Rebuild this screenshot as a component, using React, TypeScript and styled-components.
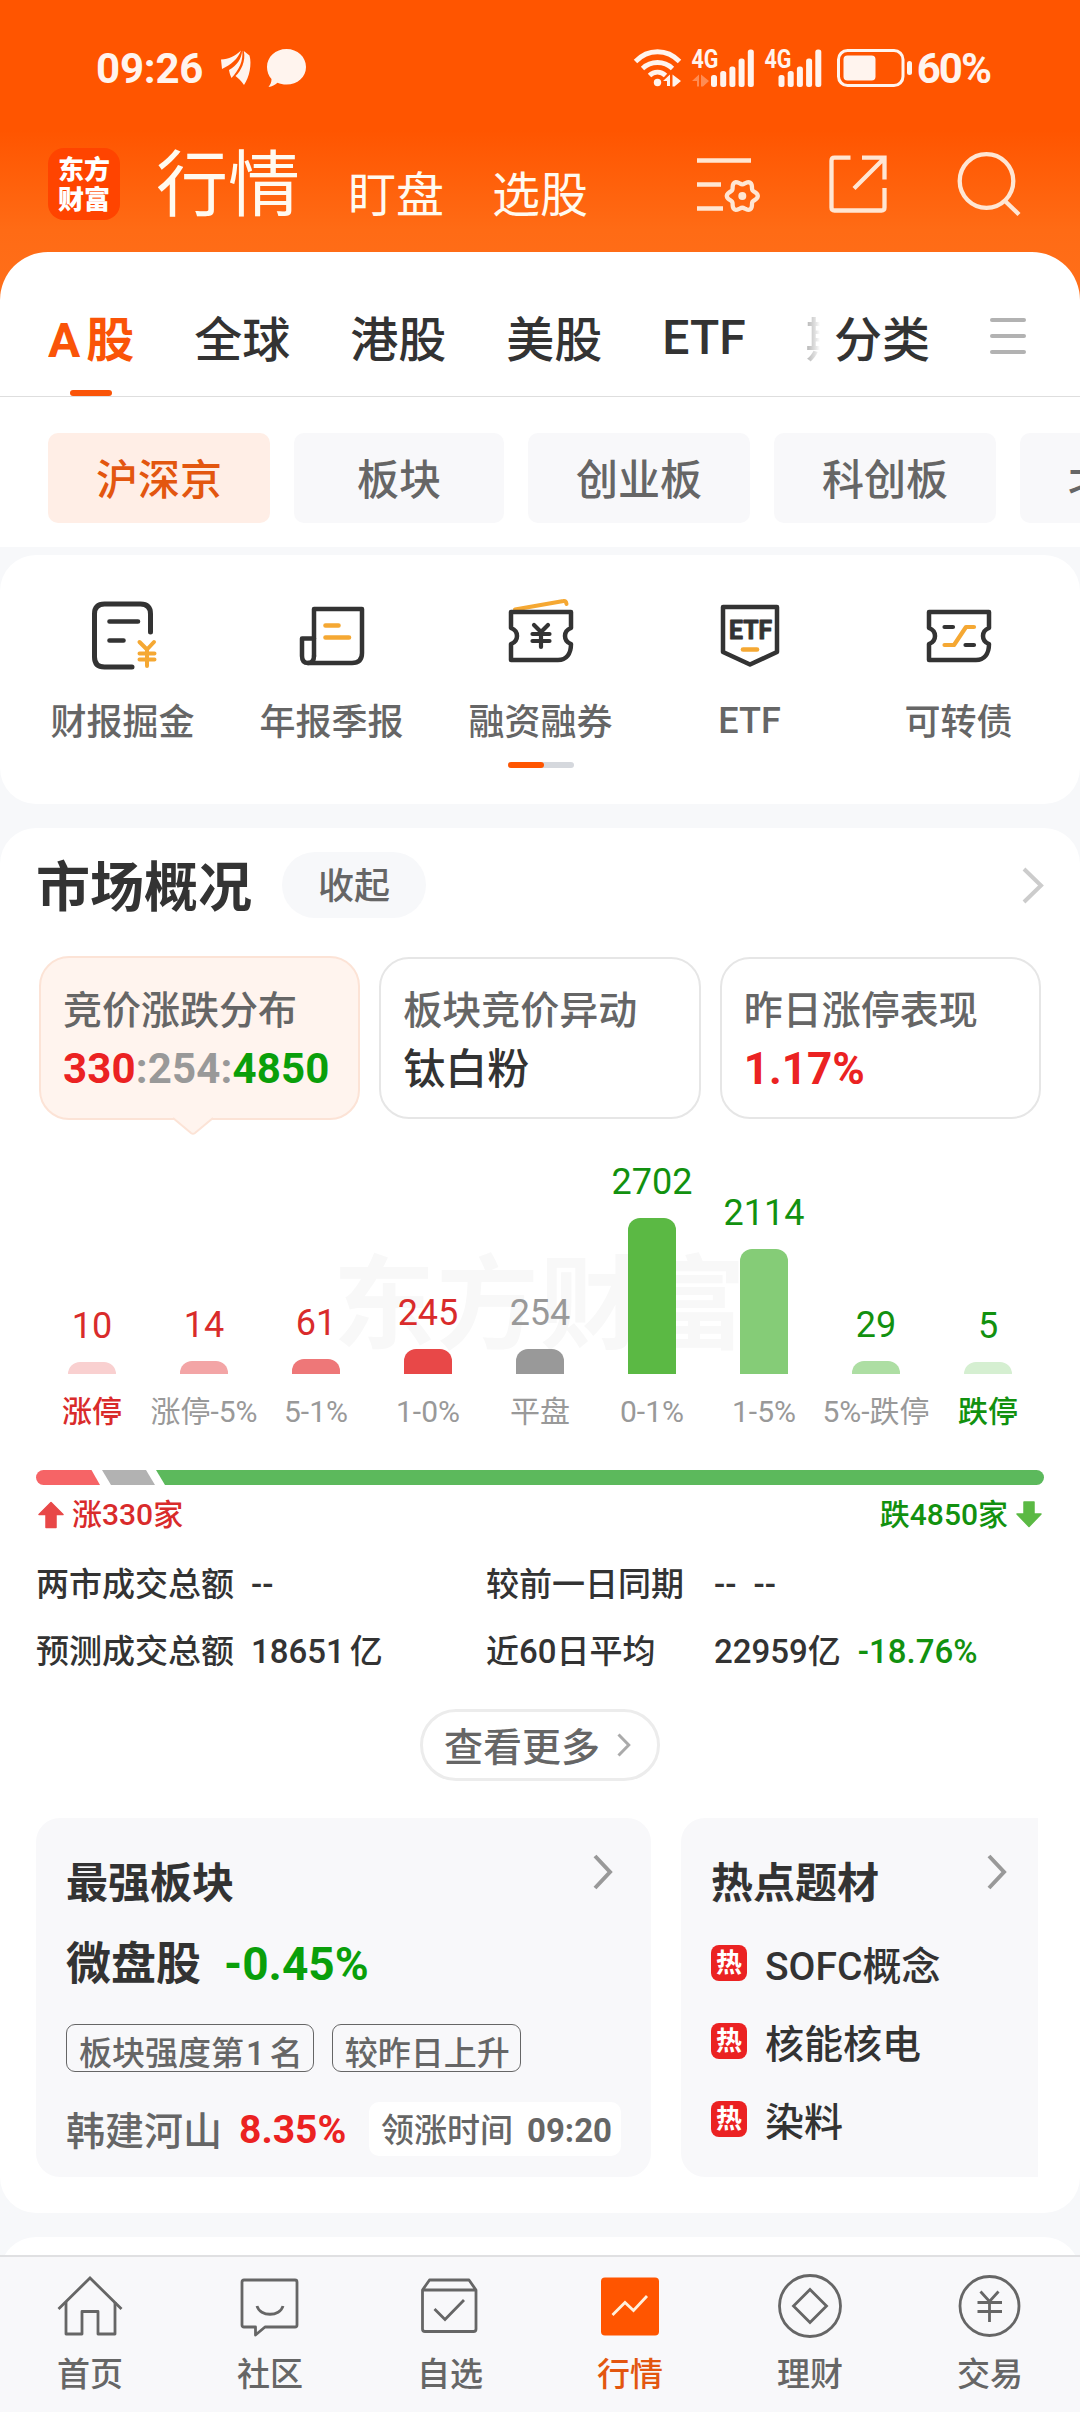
import React from 'react';
import styled, { createGlobalStyle, css } from 'styled-components';

const FONT = `Roboto, "Noto Sans CJK SC", "Noto Sans", sans-serif`;
const ORANGE = '#ff5500';
const RED = '#eb2222';
const GREEN = '#0a9f0a';
const INK = '#333333';
const MUTED = '#666666';
const PALE = '#f7f8fa';

const GlobalStyle = createGlobalStyle`
  *, *::before, *::after { box-sizing: border-box; }
  body { margin: 0; background: ${PALE}; }
  svg { display: block; flex: none; overflow: visible; }
`;

const Screen = styled.div`
  width: 1080px;
  height: 2412px;
  display: flex;
  flex-direction: column;
  overflow: hidden;
  background: ${PALE};
  font-family: ${FONT};
  color: ${INK};
  white-space: nowrap;
`;

const Scroll = styled.main`
  flex: 1;
  min-height: 0;
  overflow: hidden;
`;

/* ---------- header ---------- */

const Hero = styled.header`
  background: linear-gradient(#ff5500 0, #ff5500 130px, #ff6b15 230px, #ff6f1a 300px);
`;

const StatusBar = styled.div`
  height: 136px;
  display: flex;
  align-items: center;
  justify-content: space-between;
  padding: 0 90px 0 96px;
  color: #fff4ee;
`;

const StatusGroup = styled.div`
  display: flex;
  align-items: center;
`;

const StatusText = styled.span<{ $ml?: number; $tight?: boolean }>`
  font-size: 42px;
  line-height: 50px;
  font-weight: 700;
  letter-spacing: ${(p) => (p.$tight ? -2 : -0.2)}px;
  margin-left: ${(p) => p.$ml ?? 0}px;
  padding-top: 2px;
`;

const Gap = styled.span<{ $w: number }>`
  width: ${(p) => p.$w}px;
`;

const TitleBar = styled.div`
  height: 116px;
  padding: 0 58px 20px 48px;
  display: flex;
  align-items: center;
  color: #fffaf0;
`;

const Logo = styled.div`
  width: 72px;
  height: 72px;
  border-radius: 16px;
  background: #ff4400;
  display: flex;
  flex-direction: column;
  align-items: center;
  justify-content: center;
  padding-top: 1px;
  font-size: 26px;
  line-height: 30px;
  font-weight: 900;
  color: #fff;
`;

const PageTitle = styled.h1`
  margin: 3px 0 0 36px;
  font-size: 72px;
  line-height: 84px;
  font-weight: 400;
`;

const PageLink = styled.a`
  margin: 24px 0 0 48px;
  font-size: 48px;
  line-height: 56px;
`;

const TitleIcons = styled.div`
  margin-left: auto;
  display: flex;
  align-items: center;
  gap: 68px;
`;

/* ---------- tabs ---------- */

const Sheet = styled.section`
  background: #fff;
  border-radius: 48px 48px 0 0;
`;

const TabRow = styled.nav`
  height: 145px;
  border-bottom: 1px solid #dedede;
  display: flex;
  align-items: stretch;
  padding-left: 48px;
`;

const TabScroller = styled.div`
  width: 774px;
  display: flex;
  gap: 60px;
  overflow: hidden;
`;

const tabText = css`
  display: flex;
  align-items: center;
  padding-top: 33px;
  font-size: 48px;
  line-height: 56px;
  font-weight: 500;
  flex: none;
  height: 144px;
  padding-bottom: 0;
`;

const Tab = styled.a<{ $active?: boolean; $lift?: number }>`
  ${tabText}
  position: relative;
  font-weight: ${(p) => (p.$active ? 700 : 500)};
  color: ${(p) => (p.$active ? '#fa5408' : INK)};
  padding-bottom: ${(p) => p.$lift ?? 0}px;
  ${(p) =>
    p.$active &&
    css`
      gap: 6px;
      &::after {
        content: '';
        position: absolute;
        left: 50%;
        bottom: 0;
        width: 42px;
        height: 6px;
        margin-left: -21px;
        border-radius: 3px;
        background: #fa5408;
      }
    `}
`;

const FadedTab = styled(Tab)`
  color: transparent;
  background: linear-gradient(90deg, #b4b4b4, #e4e4e4 10px, #fff 14px);
  -webkit-background-clip: text;
  background-clip: text;
`;

const SortTab = styled.a`
  ${tabText}
  margin-left: 12px;
`;

const Burger = styled.div`
  margin: 66px 0 0 60px;
  width: 36px;
  height: 36px;
  display: flex;
  flex-direction: column;
  justify-content: space-between;
`;

const BurgerLine = styled.i`
  height: 4px;
  border-radius: 2px;
  background: #b2b2b2;
`;

const PillRow = styled.div`
  padding: 36px 0 24px 48px;
  display: flex;
  gap: 24px;
  overflow: hidden;
`;

const Pill = styled.a<{ $active?: boolean; $w: number }>`
  flex: none;
  width: ${(p) => p.$w}px;
  height: 90px;
  border-radius: 10px;
  display: flex;
  align-items: center;
  justify-content: center;
  padding-top: 5px;
  font-size: 42px;
  line-height: 50px;
  font-weight: 500;
  color: ${(p) => (p.$active ? '#e3560f' : MUTED)};
  background: ${(p) => (p.$active ? '#ffeee6' : '#f8f8fa')};
`;

/* ---------- shortcuts ---------- */

const Shortcuts = styled.section`
  margin-top: 8px;
  height: 249px;
  border-radius: 36px;
  background: #fff;
  padding: 40px 17px 0 18px;
`;

const ShortcutGrid = styled.div`
  display: grid;
  grid-template-columns: repeat(5, 1fr);
`;

const Shortcut = styled.a`
  display: flex;
  flex-direction: column;
  align-items: center;
  gap: 26px;
  font-size: 36px;
  line-height: 44px;
  font-weight: 500;
  color: ${MUTED};
`;

const ShortcutLabel = styled.span<{ $lift?: boolean }>`
  margin-top: ${(p) => (p.$lift ? -2 : 0)}px;
`;

const Pager = styled.div`
  width: 66px;
  height: 6px;
  margin: 17px auto 0;
  border-radius: 3px;
  background: #d5d8dd;
  display: flex;
`;

const PagerThumb = styled.i`
  width: 36px;
  border-radius: 3px;
  background: ${ORANGE};
`;

/* ---------- market overview ---------- */

const Market = styled.section`
  margin-top: 24px;
  height: 1385px;
  border-radius: 36px;
  background: #fff;
  padding: 24px 36px 0;
`;

const SectionHead = styled.div`
  height: 66px;
  display: flex;
  align-items: center;
`;

const SectionTitle = styled.h2`
  margin: 7px 0 0;
  font-size: 54px;
  line-height: 64px;
  font-weight: 700;
`;

const Collapse = styled.button`
  margin: 0 auto 0 30px;
  width: 144px;
  height: 66px;
  border: 0;
  border-radius: 33px;
  background: ${PALE};
  font: 400 36px/44px ${FONT};
  font-weight: 500;
  color: ${MUTED};
  padding: 4px 0 0;
`;

const MetricRow = styled.div`
  margin: 38px 3px 0 3px;
  display: grid;
  grid-template-columns: repeat(3, 1fr);
  gap: 19px;
`;

const Metric = styled.div<{ $active?: boolean }>`
  position: relative;
  height: ${(p) => (p.$active ? 164 : 162)}px;
  margin-top: ${(p) => (p.$active ? 0 : 1)}px;
  border: 2px solid ${(p) => (p.$active ? '#fce3d6' : '#e6e6e6')};
  border-radius: 30px;
  background: ${(p) => (p.$active ? '#fff4ee' : '#fff')};
  padding: ${(p) => (p.$active ? 29 : 28)}px 0 0 22px;
`;

const MetricTitle = styled.div`
  font-size: 39px;
  line-height: 48px;
  font-weight: 500;
  color: ${MUTED};
`;

const MetricValue = styled.div<{ $color?: string; $weight?: number; $size?: number }>`
  margin-top: ${(p) => (p.$weight ? 9 : 8)}px;
  font-size: ${(p) => p.$size ?? 42}px;
  line-height: 52px;
  font-weight: ${(p) => p.$weight ?? 700};
  color: ${(p) => p.$color ?? INK};
`;

const Tint = styled.span<{ $color: string }>`
  color: ${(p) => p.$color};
`;

const Tally = styled(Tint)`
  letter-spacing: 0.15px;
`;

const MetricTail = styled.svg`
  position: absolute;
  left: 50%;
  margin-left: -27px;
  top: 157px;
`;

const Chart = styled.div`
  position: relative;
  height: 254px;
  display: grid;
  grid-template-columns: repeat(9, 1fr);
  align-items: end;
`;

const Watermark = styled.div`
  position: absolute;
  left: 297px;
  bottom: 10px;
  font-size: 102px;
  line-height: 116px;
  letter-spacing: 1.5px;
  font-weight: 700;
  color: #f8f8f8;
`;

const Column = styled.div<{ $color: string }>`
  position: relative;
  display: flex;
  flex-direction: column;
  align-items: center;
  gap: 18px;
  font-size: 36px;
  line-height: 36px;
  color: ${(p) => p.$color};
`;

const Bar = styled.i<{ $fill: string }>`
  width: 48px;
  border-radius: 12px 12px 0 0;
  background: ${(p) => p.$fill};
`;

const AxisRow = styled.div`
  height: 96px;
  padding-top: 18px;
  display: grid;
  grid-template-columns: repeat(9, 112px);
`;

const AxisLabel = styled.span<{ $color: string; $strong?: boolean }>`
  display: flex;
  justify-content: center;
  font-size: 30px;
  line-height: 40px;
  font-weight: ${(p) => (p.$strong ? 500 : 400)};
  color: ${(p) => p.$color};
`;

const Ratio = styled.div`
  height: 15px;
  border-radius: 7.5px;
  overflow: hidden;
  display: flex;
`;

const RatioPart = styled.i<{ $w?: number; $fill: string; $clip: string; $pull?: number }>`
  ${(p) => (p.$w ? `width: ${p.$w}px;` : 'flex: 1;')}
  margin-left: ${(p) => p.$pull ?? 0}px;
  background: ${(p) => p.$fill};
  clip-path: polygon(${(p) => p.$clip});
`;

const RatioLabels = styled.div`
  height: 58px;
  padding: 0 2px 0 2px;
  display: flex;
  align-items: center;
  justify-content: space-between;
`;

const RatioLabel = styled.span<{ $color: string }>`
  display: flex;
  align-items: center;
  gap: 8px;
  padding-top: 1px;
  font-size: 30px;
  line-height: 40px;
  font-weight: 500;
  color: ${(p) => p.$color};
`;

const Stats = styled.dl`
  margin: 8px 0 0;
  display: grid;
  grid-template-columns: 215px 235px 228px auto;
  grid-auto-rows: 67px;
  align-items: center;
  font-size: 33px;
  line-height: 40px;
  font-weight: 500;
`;

const StatName = styled.dt``;

const StatValue = styled.dd`
  margin: 0;
  display: flex;
  gap: 17px;
`;

const Unit = styled.span`
  margin-left: 5px;
`;

const More = styled.button`
  margin: 24px auto 0;
  width: 240px;
  height: 72px;
  border: 3px solid #ececec;
  border-radius: 36px;
  background: #fff;
  padding: 0 26px 0 21px;
  display: flex;
  align-items: center;
  justify-content: space-between;
  font: 400 39px/46px ${FONT};
  font-weight: 500;
  color: ${MUTED};
`;

const MoreText = styled.span`
  margin-top: 5px;
`;

const Boards = styled.div`
  margin-top: 37px;
  display: flex;
  gap: 30px;
  padding-right: 6px;
`;

const Board = styled.article<{ $w?: number }>`
  ${(p) => (p.$w ? `width: ${p.$w}px; border-radius: 24px;` : 'flex: 1; border-radius: 24px 0 0 24px;')}
  height: 359px;
  background: #f8f8fa;
  padding: 36px 30px 0;
`;

const BoardHead = styled.div<{ $pad: number }>`
  display: flex;
  justify-content: space-between;
  align-items: flex-start;
  height: 56px;
  padding-right: ${(p) => p.$pad}px;
`;

const BoardTitle = styled.h3`
  margin: 4px 0 0;
  font-size: 42px;
  line-height: 52px;
  font-weight: 700;
`;

const Leader = styled.div`
  margin-top: 25px;
  height: 60px;
  display: flex;
  align-items: center;
  gap: 23px;
  font-size: 45px;
  line-height: 56px;
  font-weight: 700;
`;

const LeaderChange = styled(Tint)`
  margin-top: -3px;
  font-size: 46px;
`;

const TagRow = styled.div`
  margin-top: 29px;
  display: flex;
  gap: 18px;
`;

const Tag = styled.span`
  height: 48px;
  border: 1.5px solid ${MUTED};
  border-radius: 9px;
  padding: 9px 10px 0 12px;
  font-size: 33px;
  line-height: 40px;
  font-weight: 500;
  color: ${MUTED};
`;

const TagNumber = styled.span`
  margin: 0 5px 0 2px;
`;

const StockRow = styled.div`
  margin-top: 30px;
  height: 54px;
  display: flex;
  align-items: center;
  font-size: 39px;
  line-height: 48px;
  font-weight: 500;
  color: ${MUTED};
`;

const StockName = styled.span`
  margin-top: 5px;
`;

const StockGain = styled.b`
  margin: 2px 0 0 17px;
  font-weight: 700;
  color: ${RED};
`;

const LeadTime = styled.span`
  margin-left: auto;
  height: 54px;
  width: 252px;
  padding: 4px 9px 0 12px;
  border-radius: 10px;
  background: #fff;
  display: flex;
  align-items: center;
  justify-content: space-between;
  font-size: 33px;
  line-height: 40px;
`;

const Topics = styled.ul`
  list-style: none;
  margin: 16px 0 0;
  padding: 0;
`;

const Topic = styled.li`
  height: 78px;
  display: flex;
  align-items: center;
  gap: 18px;
  font-size: 39px;
  line-height: 48px;
  font-weight: 500;
`;

const HotBadge = styled.span`
  width: 36px;
  height: 36px;
  margin-top: -4px;
  border-radius: 8px;
  background: ${RED};
  color: #fff;
  text-align: center;
  font-size: 26px;
  line-height: 37px;
  font-weight: 700;
`;

const TopicName = styled.span`
  margin-top: 4px;
`;

const NextCard = styled.section`
  margin-top: 24px;
  height: 120px;
  border-radius: 36px;
  background: #fff;
`;

/* ---------- bottom navigation ---------- */

const BottomNav = styled.nav`
  flex: none;
  height: 157px;
  border-top: 2px solid #e0e0e2;
  background: #f8f8fa;
  display: grid;
  grid-template-columns: repeat(6, 1fr);
`;

const NavItem = styled.a<{ $active?: boolean }>`
  padding-top: 16px;
  display: flex;
  flex-direction: column;
  align-items: center;
  gap: 16px;
  font-size: 33px;
  line-height: 40px;
  font-weight: 500;
  color: ${(p) => (p.$active ? '#e3560f' : MUTED)};
`;

/* ---------- icons ---------- */

const Chevron = ({ w, h, color, sw }: { w: number; h: number; color: string; sw: number }) => (
  <svg width={w} height={h} viewBox={`0 0 ${w} ${h}`} fill="none" stroke={color} strokeWidth={sw}>
    <path d={`M${sw / 2} ${sw / 2}L${w - sw * 0.75} ${h / 2}L${sw / 2} ${h - sw / 2}`} />
  </svg>
);

const LeafIcon = () => (
  <svg width="30" height="36" viewBox="0 0 30 36" fill="currentColor">
    <path d="M0 9.500C8 9.500 14 6 20 .5C17 9 10 14.500 1 19Z" />
    <path d="M21.200 .5C20.500 9 16 15.500 8 20C8.500 23 9.500 26 10.500 28C18 20 22.500 11 21.200 .5Z" />
    <path d="M22.800 1C25 11 20 21 14.500 26C17 28 20.500 31 23 35C28.500 27 31 14 28.500 5.500Z" />
  </svg>
);

const BubbleIcon = () => (
  <svg width="39" height="39" viewBox="0 0 39 39" fill="currentColor">
    <path d="M19.500 0C30.500 0 39 7.800 39 18S30.500 35.500 19.500 35.500C16 35.500 13 34.800 10.500 33.700C8 36 5 37.500 1.500 38C3.500 35.500 4.500 33 4.500 30C1.500 27 0 22.500 0 18C0 7.800 8.500 0 19.500 0Z" />
  </svg>
);

const WifiIcon = () => (
  <svg width="48" height="39" viewBox="0 0 48 39" fill="none" stroke="currentColor" strokeWidth="4.800" strokeLinecap="butt">
    <path d="M1.500 12.500C14 -.5 33 -.5 45.500 12.500" />
    <path d="M8.500 19.500C17 11.500 30 11.500 38.500 19.500" />
    <path d="M15.500 26.500C20 22 27 22 31.500 26.500" />
    <circle cx="23.500" cy="33.500" r="3.700" fill="currentColor" stroke="none" />
    <path d="M29 32L36 25.500V37H33V32ZM38.500 25.500L47 32L40.500 37.500H38.500Z" fill="currentColor" stroke="none" />
  </svg>
);

const SignalIcon = ({ data }: { data?: boolean }) => {
  const x0 = data ? 19 : 13.5;
  return (
    <svg width={data ? 62 : 57} height="38" viewBox={`0 0 ${data ? 62 : 57} 38`} fill="currentColor">
      <text x="-.5" y="19" fontFamily="Roboto" fontWeight="700" fontSize="25" textLength="27" lengthAdjust="spacingAndGlyphs">
        4G
      </text>
      {data && <path opacity=".35" d="M0 32L7 25.500V37.500H5V32ZM9 25.500L17 32L11 37.500H9Z" />}
      {[12, 16, 20.5, 28.5, 37.5].map((h, i) => (
        <rect key={h} x={x0 + i * 9.2} y={38 - h} width="6" height={h} rx="2.500" />
      ))}
    </svg>
  );
};

const BatteryIcon = () => (
  <svg width="76" height="38" viewBox="0 0 76 38" fill="currentColor">
    <rect x="1.500" y="1.500" width="64.500" height="35" rx="9" fill="none" stroke="currentColor" strokeWidth="3" />
    <rect x="6.500" y="6.500" width="32" height="25" rx="4" />
    <rect x="70" y="12" width="5" height="14" rx="2.500" />
  </svg>
);

const gearPath = Array.from({ length: 73 }, (_, i) => {
  const a = (i * 5 * Math.PI) / 180;
  const r = 13.6 + 1.9 * Math.cos(6 * a);
  return `${i ? 'L' : 'M'}${(45.3 + r * Math.cos(a)).toFixed(2)} ${(40.5 + r * Math.sin(a)).toFixed(2)}`;
}).join('');

const FilterIcon = () => (
  <svg width="63" height="60" viewBox="0 0 63 60" fill="none" stroke="#ffe6d3" strokeWidth="4.500">
    <path d="M0 6.500H54M0 30.500H24M0 54.500H26" />
    <path d={gearPath + 'Z'} strokeWidth="4.300" transform="translate(0 1.500)" />
    <circle cx="45.300" cy="42" r="4" fill="#ffe6d3" stroke="none" />
  </svg>
);

const ShareIcon = () => (
  <svg width="60" height="60" viewBox="0 0 60 60" fill="none" stroke="#ffe6d3" strokeWidth="4.300">
    <path d="M22.500 3.700H6.500Q3.500 3.700 3.500 6.700V53.500Q3.500 56.500 6.500 56.500H53.500Q56.500 56.500 56.500 53.500V34" />
    <path d="M34 3.700H56.500V25.500M56 4.500L26 34.500" />
  </svg>
);

const SearchIcon = () => (
  <svg width="66" height="66" viewBox="0 0 66 66" fill="none" stroke="#ffe6d3" strokeWidth="4.300">
    <circle cx="30.500" cy="30" r="26.800" />
    <path d="M48.500 49.500L63 63.500" />
  </svg>
);

const ShortcutSvg = ({ children }: { children: React.ReactNode }) => (
  <svg width="76" height="80" viewBox="0 0 76 80" fill="none" stroke={INK} strokeWidth="4.600" strokeLinecap="round" strokeLinejoin="round">
    {children}
  </svg>
);

const AMBER = '#f5a833';

const TICKET =
  'M8 17H68V33C60 36 60 46 68 49C68 59 63 65 55 65H8V49C16 46 16 36 8 33Z';

const ReportGoldIcon = () => (
  <ShortcutSvg>
    <path d="M65.500 37V19Q65.500 9 55.500 9H19.500Q9.500 9 9.500 19V62Q9.500 72 19.500 72H47" strokeWidth="5" />
    <path d="M24.500 26.500H53M24.500 45.500H38.500" />
    <path d="M54.500 47L62 54.500L69 47M62 54.500V71M54.500 58.500H69.500M54.500 64.500H69.500" stroke={AMBER} strokeWidth="4" />
  </ShortcutSvg>
);

const ReportIcon = () => (
  <ShortcutSvg>
    <path d="M20 14H68V58Q68 68 58 68H14M20 14V61" strokeWidth="4.500" />
    <path d="M20 43.500H8V61Q8 68 14 68T20 61" strokeWidth="4.500" />
    <path d="M31.500 30.500H44.500M31.500 42.500H55" stroke={AMBER} />
  </ShortcutSvg>
);

const MarginIcon = () => (
  <ShortcutSvg>
    <path d="M12 14.500L60.500 6Q63 5.500 63.500 9" stroke={AMBER} strokeWidth="4" />
    <path d={TICKET} strokeWidth="4.500" />
    <path d="M31 30L38 37L45 30M38 37V52M29.500 39H46.500M29.500 46H46.500" strokeWidth="4.200" />
  </ShortcutSvg>
);

const EtfIcon = () => (
  <ShortcutSvg>
    <path d="M11 12H65V57L38 69.500L11 57Z" strokeWidth="4.500" />
    <text x="17" y="44" fill={INK} strokeWidth="1" stroke={INK} fontFamily="Roboto" fontWeight="700" fontSize="26" textLength="43" lengthAdjust="spacingAndGlyphs">
      ETF
    </text>
    <path d="M31 54.500H45" stroke={AMBER} />
  </ShortcutSvg>
);

const BondIcon = () => (
  <ShortcutSvg>
    <path d={TICKET} strokeWidth="4.500" />
    <path d="M23.500 32H32M44.500 50H53" strokeWidth="4.200" />
    <path d="M23.500 50H33L45 32H53" stroke={AMBER} strokeWidth="4.200" />
  </ShortcutSvg>
);

const NavSvg = ({ children }: { children: React.ReactNode }) => (
  <svg width="66" height="66" viewBox="0 0 66 66" fill="none" stroke={MUTED} strokeWidth="2.800">
    {children}
  </svg>
);

const HomeIcon = () => (
  <NavSvg>
    <path d="M1.500 36L33 5L64.500 36" />
    <path d="M9 29V61H25V38.500H41V61H58V29" strokeLinejoin="round" />
  </NavSvg>
);

const ChatIcon = () => (
  <NavSvg>
    <path d="M7 7H58Q60 7 60 9V52Q60 54 58 54H28L18.500 62V54H7Q5 54 5 52V9Q5 7 7 7Z" strokeLinejoin="round" />
    <path d="M20 33C23 44 43 44 46 33" />
  </NavSvg>
);

const WatchIcon = () => (
  <NavSvg>
    <path d="M5.500 17L12.500 7H52L59 17V56Q59 58.500 56.500 58.500H8Q5.500 58.500 5.500 56ZM5.500 17H59" strokeLinejoin="round" />
    <path d="M17.500 36L28 46.500L47 27" />
  </NavSvg>
);

const QuoteIcon = () => (
  <NavSvg>
    <rect x="4" y="4.500" width="58" height="58" rx="4" fill={ORANGE} stroke="none" />
    <path d="M15.500 42L28 29.500L36.500 37.500L50 23" stroke="#fff0dc" />
  </NavSvg>
);

const WealthIcon = () => (
  <NavSvg>
    <circle cx="33" cy="33" r="30.500" />
    <path d="M33 16.500L49.500 33L33 49.500L16.500 33Z" />
  </NavSvg>
);

const TradeIcon = () => (
  <NavSvg>
    <circle cx="32.500" cy="33" r="29.500" />
    <path d="M23.500 18.500L32.500 28.500L41.500 18.500M32.500 28.500V49M20.500 29.500H45M20.500 38.500H45" />
  </NavSvg>
);

const Arrow = ({ color, down }: { color: string; down?: boolean }) => (
  <svg width="26" height="28" viewBox="0 0 26 28" fill={color} stroke={color} strokeWidth="1.500" strokeLinejoin="round">
    <path d={down ? 'M8 1H18V13H25L13 25.500L1 13H8Z' : 'M13 1.500L25 13.500H18V26.500H8V13.500H1Z'} />
  </svg>
);

/* ---------- data ---------- */

const COLOR_UP = '#d92b2b';
const COLOR_DOWN = '#12910f';
const COLOR_FLAT = '#999999';

const distribution = [
  { count: 10, label: '涨停', h: 12, fill: '#f9d0d0', text: COLOR_UP, axis: COLOR_UP },
  { count: 14, label: '涨停-5%', h: 13, fill: '#f3a5a6', text: COLOR_UP, axis: COLOR_FLAT },
  { count: 61, label: '5-1%', h: 15, fill: '#ee7778', text: COLOR_UP, axis: COLOR_FLAT },
  { count: 245, label: '1-0%', h: 25, fill: '#e84848', text: COLOR_UP, axis: COLOR_FLAT },
  { count: 254, label: '平盘', h: 25.5, fill: '#999999', text: COLOR_FLAT, axis: COLOR_FLAT },
  { count: 2702, label: '0-1%', h: 156.5, fill: '#5bb944', text: COLOR_DOWN, axis: COLOR_FLAT },
  { count: 2114, label: '1-5%', h: 125, fill: '#85cc77', text: COLOR_DOWN, axis: COLOR_FLAT },
  { count: 29, label: '5%-跌停', h: 13, fill: '#addea3', text: COLOR_DOWN, axis: COLOR_FLAT },
  { count: 5, label: '跌停', h: 12, fill: '#d5efd1', text: COLOR_DOWN, axis: COLOR_DOWN },
];

const shortcuts = [
  { label: '财报掘金', icon: <ReportGoldIcon /> },
  { label: '年报季报', icon: <ReportIcon /> },
  { label: '融资融券', icon: <MarginIcon /> },
  { label: 'ETF', icon: <EtfIcon />, lift: true },
  { label: '可转债', icon: <BondIcon /> },
];

const navItems = [
  { label: '首页', icon: <HomeIcon /> },
  { label: '社区', icon: <ChatIcon /> },
  { label: '自选', icon: <WatchIcon /> },
  { label: '行情', icon: <QuoteIcon />, active: true },
  { label: '理财', icon: <WealthIcon /> },
  { label: '交易', icon: <TradeIcon /> },
];

export default function App() {
  return (
    <Screen>
      <GlobalStyle />
      <Scroll>
        <Hero>
          <StatusBar>
            <StatusGroup>
              <StatusText>09:26</StatusText>
              <Gap $w={18} />
              <LeafIcon />
              <Gap $w={16} />
              <BubbleIcon />
            </StatusGroup>
            <StatusGroup>
              <WifiIcon />
              <Gap $w={10} />
              <SignalIcon data />
              <Gap $w={11} />
              <SignalIcon />
              <Gap $w={15} />
              <BatteryIcon />
              <StatusText $ml={4} $tight>60%</StatusText>
            </StatusGroup>
          </StatusBar>
          <TitleBar>
            <Logo>
              <span>东方</span>
              <span>财富</span>
            </Logo>
            <PageTitle>行情</PageTitle>
            <PageLink>盯盘</PageLink>
            <PageLink>选股</PageLink>
            <TitleIcons>
              <FilterIcon />
              <ShareIcon />
              <SearchIcon />
            </TitleIcons>
          </TitleBar>
          <Sheet>
            <TabRow>
              <TabScroller>
                <Tab $active>
                  <span>A</span>
                  <span>股</span>
                </Tab>
                <Tab>全球</Tab>
                <Tab>港股</Tab>
                <Tab>美股</Tab>
                <Tab $lift={5}>ETF</Tab>
                <FadedTab>期货</FadedTab>
              </TabScroller>
              <SortTab>分类</SortTab>
              <Burger>
                <BurgerLine />
                <BurgerLine />
                <BurgerLine />
              </Burger>
            </TabRow>
            <PillRow>
              <Pill $w={222} $active>沪深京</Pill>
              <Pill $w={210}>板块</Pill>
              <Pill $w={222}>创业板</Pill>
              <Pill $w={222}>科创板</Pill>
              <Pill $w={222}>北交所</Pill>
            </PillRow>
          </Sheet>
        </Hero>

        <Shortcuts>
          <ShortcutGrid>
            {shortcuts.map((s) => (
              <Shortcut key={s.label}>
                {s.icon}
                <ShortcutLabel $lift={s.lift}>{s.label}</ShortcutLabel>
              </Shortcut>
            ))}
          </ShortcutGrid>
          <Pager>
            <PagerThumb />
          </Pager>
        </Shortcuts>

        <Market>
          <SectionHead>
            <SectionTitle>市场概况</SectionTitle>
            <Collapse>收起</Collapse>
            <Chevron w={22} h={37} color="#cccccc" sw={4} />
          </SectionHead>

          <MetricRow>
            <Metric $active>
              <MetricTitle>竞价涨跌分布</MetricTitle>
              <MetricValue>
                <Tally $color={RED}>330</Tally>
                <Tally $color="#999999">:254:</Tally>
                <Tally $color={GREEN}>4850</Tally>
              </MetricValue>
              <MetricTail width="40" height="20" viewBox="0 0 40 20">
                <path d="M0 0H40V3L22 18Q20 19.500 18 18L0 3Z" fill="#fff4ee" />
                <path d="M0 3L18 18Q20 19.500 22 18L40 3" fill="none" stroke="#fce3d6" strokeWidth="2" />
              </MetricTail>
            </Metric>
            <Metric>
              <MetricTitle>板块竞价异动</MetricTitle>
              <MetricValue $weight={500}>钛白粉</MetricValue>
            </Metric>
            <Metric>
              <MetricTitle>昨日涨停表现</MetricTitle>
              <MetricValue $color={RED} $size={44}>1.17%</MetricValue>
            </Metric>
          </MetricRow>

          <Chart>
            <Watermark>东方财富</Watermark>
            {distribution.map((d) => (
              <Column key={d.label} $color={d.text}>
                <span>{d.count}</span>
                <Bar $fill={d.fill} style={{ height: d.h }} />
              </Column>
            ))}
          </Chart>
          <AxisRow>
            {distribution.map((d) => (
              <AxisLabel key={d.label} $color={d.axis} $strong={d.axis !== COLOR_FLAT}>
                {d.label}
              </AxisLabel>
            ))}
          </AxisRow>

          <Ratio>
            <RatioPart $w={64} $fill="#f66466" $clip="0 0, 55.500px 0, 100% 100%, 0 100%" />
            <RatioPart $w={53} $pull={2} $fill="#b2b2b2" $clip="0 0, 44px 0, 100% 100%, 9px 100%" />
            <RatioPart $pull={1} $fill="#5cb95c" $clip="0 0, 100% 0, 100% 100%, 9px 100%" />
          </Ratio>
          <RatioLabels>
            <RatioLabel $color={COLOR_UP}>
              <Arrow color="#e84848" />
              涨330家
            </RatioLabel>
            <RatioLabel $color={COLOR_DOWN}>
              跌4850家
              <Arrow color="#5bb944" down />
            </RatioLabel>
          </RatioLabels>

          <Stats>
            <StatName>两市成交总额</StatName>
            <StatValue>--</StatValue>
            <StatName>较前一日同期</StatName>
            <StatValue>
              <span>--</span>
              <span>--</span>
            </StatValue>
            <StatName>预测成交总额</StatName>
            <StatValue>
              <span>18651<Unit>亿</Unit></span>
            </StatValue>
            <StatName>近60日平均</StatName>
            <StatValue>
              <span>22959亿</span>
              <Tint $color={COLOR_DOWN}>-18.76%</Tint>
            </StatValue>
          </Stats>

          <More>
            <MoreText>查看更多</MoreText>
            <Chevron w={14} h={24} color="#aaaaaa" sw={3} />
          </More>

          <Boards>
            <Board $w={615}>
              <BoardHead $pad={8}>
                <BoardTitle>最强板块</BoardTitle>
                <Chevron w={20} h={36} color="#999999" sw={4} />
              </BoardHead>
              <Leader>
                <span>微盘股</span>
                <LeaderChange $color={GREEN}>-0.45%</LeaderChange>
              </Leader>
              <TagRow>
                <Tag>
                  板块强度第<TagNumber>1</TagNumber>名
                </Tag>
                <Tag>较昨日上升</Tag>
              </TagRow>
              <StockRow>
                <StockName>韩建河山</StockName>
                <StockGain>8.35%</StockGain>
                <LeadTime>
                  <span>领涨时间</span>
                  <b>09:20</b>
                </LeadTime>
              </StockRow>
            </Board>
            <Board>
              <BoardHead $pad={1}>
                <BoardTitle>热点题材</BoardTitle>
                <Chevron w={20} h={36} color="#999999" sw={4} />
              </BoardHead>
              <Topics>
                {['SOFC概念', '核能核电', '染料'].map((t) => (
                  <Topic key={t}>
                    <HotBadge>热</HotBadge>
                    <TopicName>{t}</TopicName>
                  </Topic>
                ))}
              </Topics>
            </Board>
          </Boards>
        </Market>
        <NextCard />
      </Scroll>

      <BottomNav>
        {navItems.map((n) => (
          <NavItem key={n.label} $active={n.active}>
            {n.icon}
            {n.label}
          </NavItem>
        ))}
      </BottomNav>
    </Screen>
  );
}
